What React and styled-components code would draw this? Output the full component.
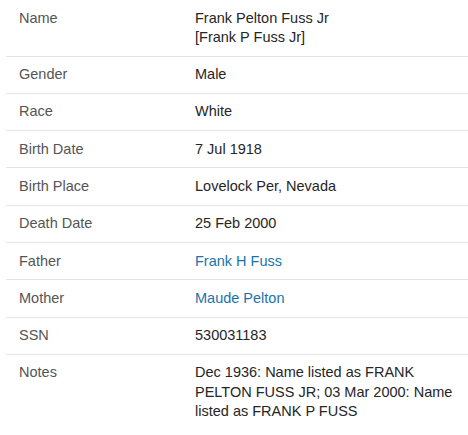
import styled, { createGlobalStyle } from "styled-components";

const GlobalStyle = createGlobalStyle`
  body {
    margin: 0;
    background: #ffffff;
    font-family: "Liberation Sans", Arial, sans-serif;
  }
`;

const Table = styled.div`
  margin-left: 6px;
  display: grid;
  grid-template-columns: 189px 1fr;
  font-size: 14.5px;
  line-height: 19.3px;
`;

const Row = styled.div`
  display: contents;
  & > div {
    padding-top: 8.5px;
    padding-bottom: 8.5px;
    border-bottom: ${(p) => (p.$last ? "none" : "1px solid #e3e3e3")};
  }
`;

const Label = styled.div`
  padding-left: 13px;
  color: #555555;
`;

const Value = styled.div`
  padding-right: 6px;
  color: #262626;
`;

const PersonLink = styled.a`
  color: #1a74aa;
  text-decoration: none;
  cursor: pointer;
`;

const rows = [
  { label: "Name", value: <>Frank Pelton Fuss Jr<br />[Frank P Fuss Jr]</> },
  { label: "Gender", value: "Male" },
  { label: "Race", value: "White" },
  { label: "Birth Date", value: "7 Jul 1918" },
  { label: "Birth Place", value: "Lovelock Per, Nevada" },
  { label: "Death Date", value: "25 Feb 2000" },
  { label: "Father", value: <PersonLink>Frank H Fuss</PersonLink> },
  { label: "Mother", value: <PersonLink>Maude Pelton</PersonLink> },
  { label: "SSN", value: "530031183" },
  {
    label: "Notes",
    value:
      "Dec 1936: Name listed as FRANK PELTON FUSS JR; 03 Mar 2000: Name listed as FRANK P FUSS",
  },
];

export default function App() {
  return (
    <>
      <GlobalStyle />
      <Table>
        {rows.map((r, i) => (
          <Row key={r.label} $last={i === rows.length - 1}>
            <Label>{r.label}</Label>
            <Value>{r.value}</Value>
          </Row>
        ))}
      </Table>
    </>
  );
}
